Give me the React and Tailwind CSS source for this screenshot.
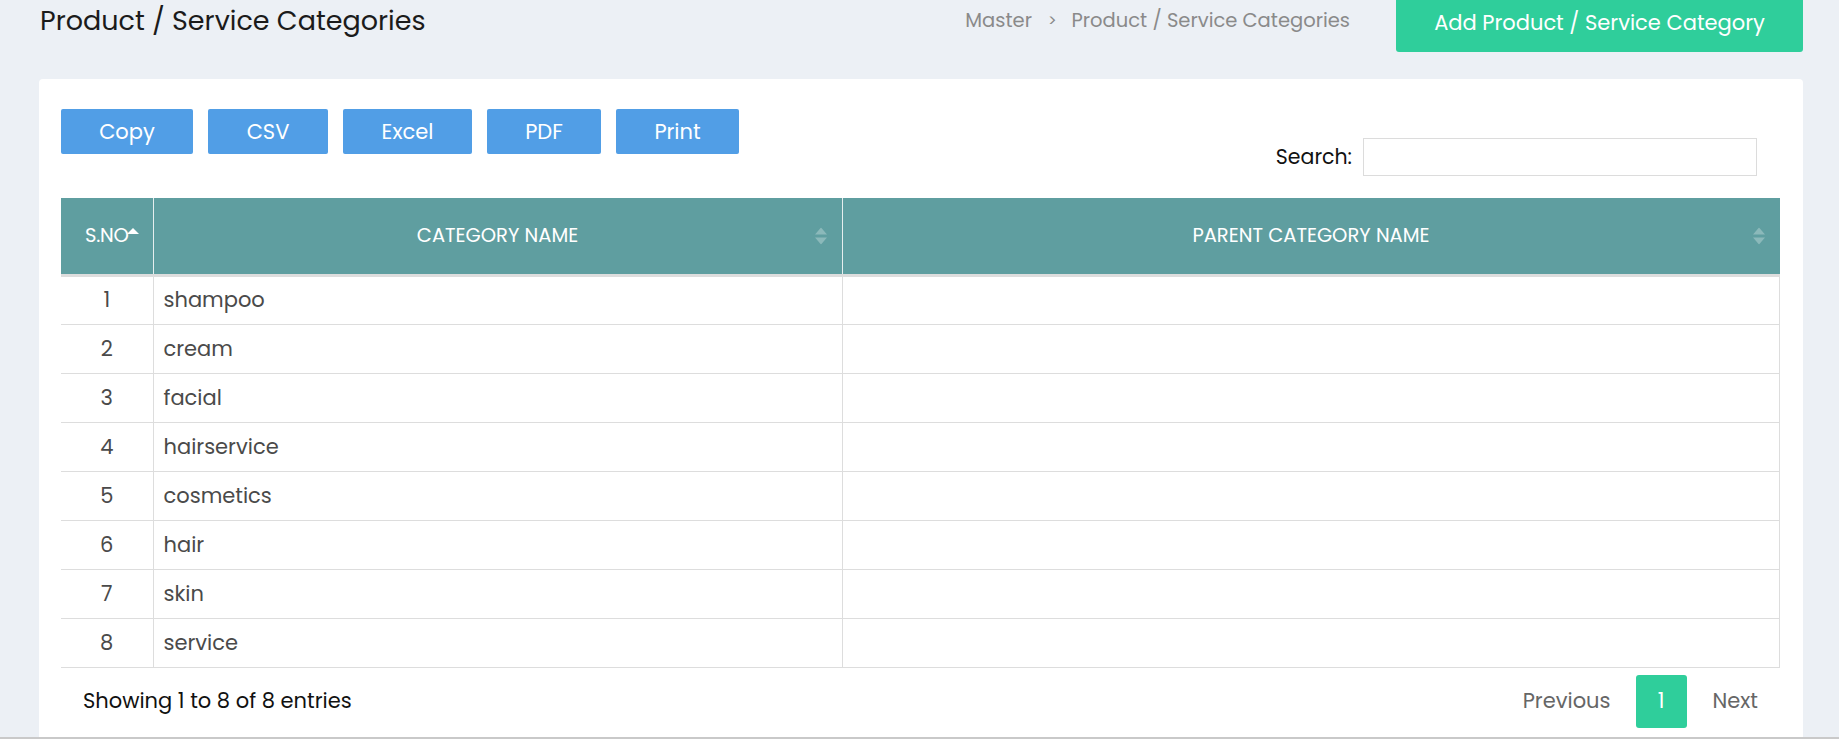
import React from "react";

const rows = ["shampoo", "cream", "facial", "hairservice", "cosmetics", "hair", "skin", "service"];
const exportButtons = [
  { label: "Copy", w: "w-[132px]" },
  { label: "CSV", w: "w-[120px]" },
  { label: "Excel", w: "w-[129px]" },
  { label: "PDF", w: "w-[114px]" },
  { label: "Print", w: "w-[123px]" },
];

function SortBoth() {
  return (
    <svg width="12" height="17" viewBox="0 0 12 17" className="absolute right-[15px] top-1/2 -translate-y-1/2">
      <path d="M6 0 L12 7 H0 Z" fill="#ffffff" fillOpacity="0.28" />
      <path d="M6 17 L12 10 H0 Z" fill="#ffffff" fillOpacity="0.28" />
    </svg>
  );
}

export default function App() {
  return (
    <div className="h-[739px] w-full overflow-hidden bg-[#ecf0f5] font-['Poppins','Inter',sans-serif] flex flex-col">
      {/* page header */}
      <div className="flex items-start h-[79px] pl-[40px] pr-[36px] shrink-0">
        <h1 className="text-[27px] text-[#1b1b1b] font-normal leading-none mt-[7px]">Product / Service Categories</h1>
        <div className="ml-auto flex items-start">
          <div className="flex items-center text-[19.5px] text-[#8a8a8a] mt-[6px] mr-[46px]">
            <span>Master</span>
            <span className="ml-[16px] mr-[15px] text-[16px]">&gt;</span>
            <span>Product / Service Categories</span>
          </div>
          <button className="h-[52px] w-[407px] bg-[#2fce9b] text-white text-[21px] pb-[6px] rounded-b-[3px]">
            Add Product / Service Category
          </button>
        </div>
      </div>

      {/* card */}
      <div className="flex-1 ml-[39px] mr-[36px] bg-white rounded-t-[4px] px-[22px] pt-[30px] flex flex-col">
        <div className="flex items-start justify-between mb-[22px]">
          <div className="flex gap-[15px]">
            {exportButtons.map((b) => (
              <button key={b.label} className={`${b.w} h-[45px] bg-[#519ee6] text-white text-[21px] rounded-[2px]`}>
                {b.label}
              </button>
            ))}
          </div>
          <div className="flex items-center mt-[29px] mr-[24px]">
            <label className="text-[20.5px] text-[#111] mr-[11px]">Search:</label>
            <input className="w-[394px] h-[38px] border border-[#dcdcdc] outline-none" />
          </div>
        </div>

        <table className="w-[1719px] border-collapse table-fixed">
          <thead>
            <tr className="bg-[#5f9ea0] text-white text-[19.5px] h-[77px] border-b-[3px] border-[#dddddd]">
              <th className="w-[92px] font-normal border-r border-[#e6eeee]">
                <span className="relative tracking-[-0.3px]">
                  S.NO
                  <svg width="12" height="6" viewBox="0 0 12 6" className="absolute -right-[11px] top-[6px]">
                    <path d="M6 0 L12 6 H0 Z" fill="#ffffff" />
                  </svg>
                </span>
              </th>
              <th className="w-[689px] font-normal relative border-r border-[#e6eeee]">
                CATEGORY NAME
                <SortBoth />
              </th>
              <th className="font-normal relative">
                PARENT CATEGORY NAME
                <SortBoth />
              </th>
            </tr>
          </thead>
          <tbody className="text-[21px] text-[#4a4a4a]">
            {rows.map((r, i) => (
              <tr key={r} className="h-[49px] border-b border-[#dddddd]">
                <td className="text-center border-r border-[#dddddd]">{i + 1}</td>
                <td className="pl-[10px] border-r border-[#dddddd]">{r}</td>
                <td className="border-r border-[#dddddd]"></td>
              </tr>
            ))}
          </tbody>
        </table>

        <div className="flex items-center justify-between pl-[22px] pr-[23px] mt-[7px]">
          <div className="text-[21px] text-[#111]">Showing 1 to 8 of 8 entries</div>
          <div className="flex items-center text-[21px] text-[#666]">
            <span className="mr-[25px]">Previous</span>
            <span className="w-[51px] h-[53px] bg-[#2fce9b] text-white rounded-[3px] flex items-center justify-center">1</span>
            <span className="ml-[26px]">Next</span>
          </div>
        </div>
      </div>
      <div className="h-[2px] bg-[#c9c9c9] shrink-0"></div>
    </div>
  );
}
